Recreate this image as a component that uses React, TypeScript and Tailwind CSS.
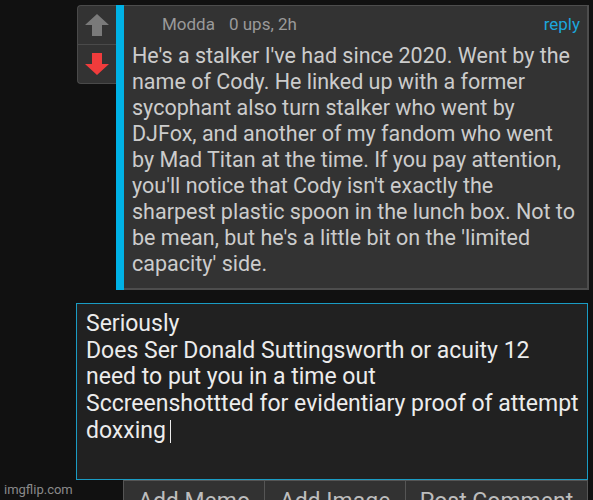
export default function App() {
  const body = [
    "He's a stalker I've had since 2020. Went by the",
    "name of Cody. He linked up with a former",
    "sycophant also turn stalker who went by",
    "DJFox, and another of my fandom who went",
    "by Mad Titan at the time. If you pay attention,",
    "you'll notice that Cody isn't exactly the",
    "sharpest plastic spoon in the lunch box. Not to",
    "be mean, but he's a little bit on the 'limited",
    "capacity' side.",
  ]

  const lines = [
    "Seriously",
    "Does Ser Donald Suttingsworth or acuity 12",
    "need to put you in a time out",
    "Sccreenshottted for evidentiary proof of attempt",
  ]

  return (
    <div
      className="relative w-[593px] h-[500px] overflow-hidden bg-[#111111]"
      style={{ fontFamily: "Roboto, 'Noto Sans', sans-serif" }}
    >
      {/* Comment */}
      <div className="flex pl-[77px] pt-[5px]">
        {/* Vote box */}
        <div className="w-[39px] h-[79px] flex flex-col rounded-l-[4px] border border-r-0 border-[#4a4a4a] bg-[#333333]">
          <div className="h-[39px] flex items-center justify-center border-b border-[#4a4a4a]">
            <svg width="24" height="22" viewBox="0 0 24 22">
              <path d="M12 0 L24 11 L17 11 L17 22 L7 22 L7 11 L0 11 Z" fill="#7a7a7a" />
            </svg>
          </div>
          <div className="flex-1 flex items-center justify-center">
            <svg width="24" height="22" viewBox="0 0 24 22">
              <path d="M7 0 L17 0 L17 11 L24 11 L12 22 L0 11 L7 11 Z" fill="#f03c3c" />
            </svg>
          </div>
        </div>
        <div className="w-[8px] h-[285px] bg-[#00b2e6]" />
        <div className="w-[465px] h-[285px] bg-[#333333] border-t border-r-2 border-b-2 border-[#4d4d4d] pl-[8px] pr-[7px]">
          <div className="flex items-center h-[37px] text-[17px] text-[#9a9a9a]">
            <span className="ml-[30px]">Modda</span>
            <span className="ml-[14px]">0 ups, 2h</span>
            <span className="ml-auto text-[#1ca6dc]">reply</span>
          </div>
          <div className="text-[21.5px] leading-[26px] text-[#cccccc]">
            {body.map((l) => (
              <div key={l} className="whitespace-nowrap">
                {l}
              </div>
            ))}
          </div>
        </div>
      </div>

      {/* Reply box */}
      <div className="ml-[76px] mt-[13px] w-[512px] h-[177px] border border-[#1a9cc4] bg-[#212121] px-[9px] pt-[7px] text-[23px] leading-[26.7px] text-[#ececec]">
        {lines.map((l) => (
          <div key={l} className="whitespace-nowrap">
            {l}
          </div>
        ))}
        <div className="flex items-center">
          doxxing
          <span className="ml-[4px] inline-block w-[1px] h-[23px] bg-[#ececec]" />
        </div>
      </div>

      {/* Buttons */}
      <div className="ml-[123px] flex h-[30px] text-[23px] leading-[28px] text-[#bdbdbd]">
        <div className="w-[141px] border-t border-l border-[#555555] bg-[#323232] flex justify-center pt-[7px] whitespace-nowrap">Add Memo</div>
        <div className="w-[141px] border-t border-l border-[#555555] bg-[#323232] flex justify-center pt-[7px] whitespace-nowrap">Add Image</div>
        <div className="w-[183px] border-t border-l border-r border-[#555555] bg-[#323232] flex justify-center pt-[7px] whitespace-nowrap">Post Comment</div>
      </div>

      <div className="absolute left-[4px] bottom-[1px] text-[13px] text-[#8a8a8a]">imgflip.com</div>
    </div>
  )
}
